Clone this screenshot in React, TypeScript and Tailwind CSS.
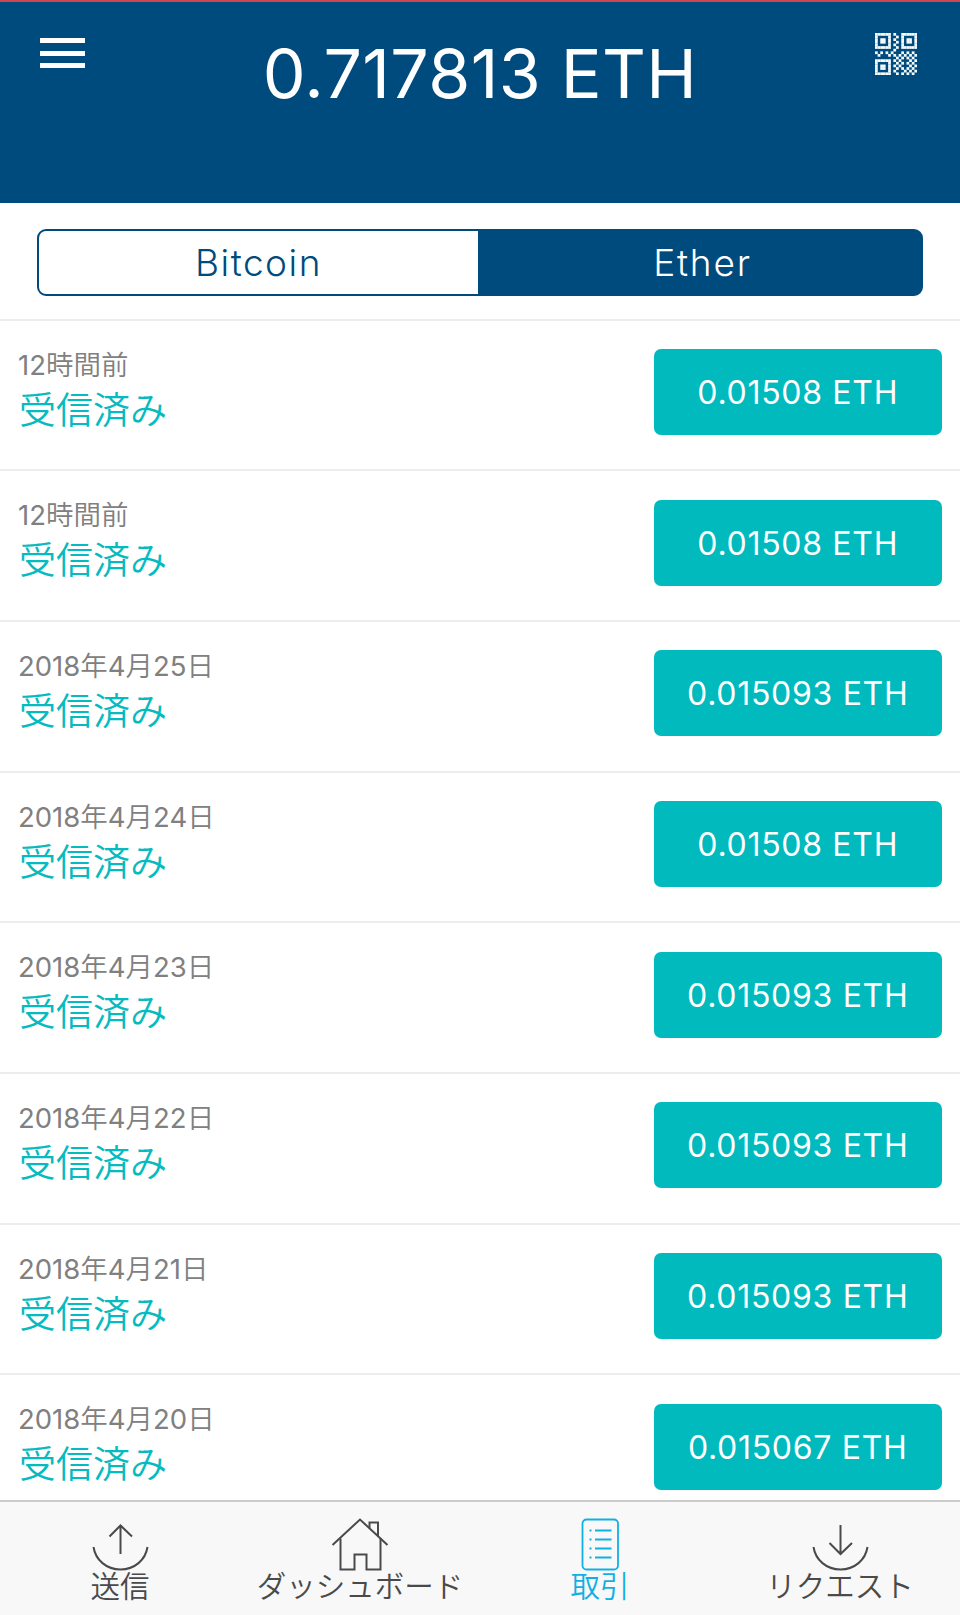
import React from 'react';

const transactions = [
  { date: '12時間前', amount: '0.01508 ETH' },
  { date: '12時間前', amount: '0.01508 ETH' },
  { date: '2018年4月25日', amount: '0.015093 ETH' },
  { date: '2018年4月24日', amount: '0.01508 ETH' },
  { date: '2018年4月23日', amount: '0.015093 ETH' },
  { date: '2018年4月22日', amount: '0.015093 ETH' },
  { date: '2018年4月21日', amount: '0.015093 ETH' },
  { date: '2018年4月20日', amount: '0.015067 ETH' },
];

// 16x16 module map
const qrModules = [
  '######.#..######',
  '#....#..#.#....#',
  '#.##.#.#..#.##.#',
  '#.##.#..#.#.##.#',
  '#....#.#..#....#',
  '######..#.######',
  '.......#........',
  '#.#.#.#...#.#.#.',
  '.#...#.#.#.#.#.#',
  '........#.#.#.#.',
  '######.#.#...#.#',
  '#....#..#.#.#.#.',
  '#.##.#.#.#...#.#',
  '#.##.#..#.#.#.#.',
  '#....#.#...#.#.#',
  '######..#.#.#.#.',
];

function QrIcon() {
  return (
    <svg viewBox="0 0 16 16" className="h-[42px] w-[42px]" fill="#f4fafc">
      {qrModules.map((row, y) =>
        row.split('').map((cell, x) =>
          cell === '#' ? <rect key={`${x}-${y}`} x={x} y={y} width="1.05" height="1.05" /> : null
        )
      )}
    </svg>
  );
}

function SendIcon() {
  return (
    <svg viewBox="0 0 60 56" className="h-14 w-[60px]" fill="none" stroke="currentColor" strokeWidth="2">
      <path d="M30.500 38V10M19.500 20.500 30.500 9.500 42 20.500" />
      <path d="M3.500 31C5.500 44 16.500 53.500 30.500 53.500S55.500 44 57.500 31" />
    </svg>
  );
}

function HomeIcon() {
  return (
    <svg viewBox="0 0 60 56" className="h-14 w-[60px]" fill="none" stroke="currentColor" strokeWidth="2">
      <path d="M2.500 29 30 3.500 57.500 29" />
      <path d="M10.500 22.500V53.500H24.500V38.500H36.500V53.500H50.500V22.500" />
      <path d="M39.500 12V6.500H48V20" />
    </svg>
  );
}

function ListIcon() {
  return (
    <svg viewBox="0 0 60 56" className="h-14 w-[60px]" fill="none" stroke="currentColor" strokeWidth="1.800">
      <rect x="12.500" y="3.500" width="35.500" height="50" rx="4" />
      <path d="M25 14.500H41.500M25 23.500H41.500M25 32.500H41.500M25 41.500H41.500" />
      <path d="M19.500 14.500H21.500M19.500 23.500H21.500M19.500 32.500H21.500M19.500 41.500H21.500" />
    </svg>
  );
}

function RequestIcon() {
  return (
    <svg viewBox="0 0 60 56" className="h-14 w-[60px]" fill="none" stroke="currentColor" strokeWidth="2">
      <path d="M30.500 9V37.500M19.500 27 30.500 38 42 27" />
      <path d="M3.500 31C5.500 44 16.500 53.500 30.500 53.500S55.500 44 57.500 31" />
    </svg>
  );
}

// digits are set a little heavier than the kanji around them
function DateLabel({ value }: { value: string }) {
  return (
    <p className="whitespace-nowrap text-[27.500px] font-[350] leading-[40px] text-[#808080]">
      {value.split(/(\d+)/).map((part, i) =>
        /\d/.test(part) ? (
          <span key={i} className="font-normal">
            {part}
          </span>
        ) : (
          part
        )
      )}
    </p>
  );
}

const tabs = [
  { label: '送信', icon: <SendIcon />, active: false },
  { label: 'ダッシュボード', icon: <HomeIcon />, active: false },
  { label: '取引', icon: <ListIcon />, active: true },
  { label: 'リクエスト', icon: <RequestIcon />, active: false },
];

export default function App(): React.ReactElement {
  return (
    <div className="flex h-[1615px] w-[960px] flex-col overflow-hidden bg-white font-['Inter','Noto_Sans_CJK_JP',sans-serif]">
      {/* HEADER */}
      <header className="flex h-[203px] shrink-0 items-start justify-between border-t-2 border-[#d2464e] bg-[#004b7d] pl-10 pr-[43px]">
        <button className="mt-9 flex w-[45px] flex-col gap-[7.500px]">
          <span className="h-[5px] w-full bg-white" />
          <span className="h-[5px] w-full bg-white" />
          <span className="h-[5px] w-full bg-white" />
        </button>
        <h1 className="mt-[31px] whitespace-nowrap text-[68px] leading-[80px] tracking-[0.400px] text-white">
          0.717813 ETH
        </h1>
        <button className="mt-[31px]">
          <QrIcon />
        </button>
      </header>

      {/* CURRENCY SWITCH */}
      <div className="h-[115.500px] shrink-0 px-[37px] pt-[26px]">
        <div className="flex h-[67px] rounded-[9px] border-2 border-[#004b7d] bg-[#004b7d] text-[37px] font-light">
          <button className="flex w-[439px] items-center justify-center rounded-l-[7px] bg-white tracking-[1.500px] text-[#004b7d]">
            Bitcoin
          </button>
          <button className="flex flex-1 items-center justify-center pl-1.5 tracking-[1.800px] text-white">
            Ether
          </button>
        </div>
      </div>

      {/* TRANSACTIONS */}
      <ul className="h-[1181px] shrink-0 overflow-hidden">
        {transactions.map((tx, i) => (
          <li key={i} className="flex h-[150.700px] justify-between border-t-2 border-[#ececec] pl-[18px] pr-[18.500px]">
            <div className="pt-[24px]">
              <DateLabel value={tx.date} />
              <p className="pl-px pt-px text-[37px] font-[350] leading-[50px] text-[#06bbc0]">受信済み</p>
            </div>
            <div className="mt-[28.500px] flex h-[86px] w-[287.500px] items-center justify-center rounded-[7px] bg-[#00babe] pt-[2px] text-[32px] tracking-[0.700px] text-white">
              {tx.amount}
            </div>
          </li>
        ))}
      </ul>

      {/* TAB BAR */}
      <nav className="grid flex-1 grid-cols-4 border-t-2 border-[#cbcbcb] bg-[#f8f8f8]">
        {tabs.map((tab) => (
          <button
            key={tab.label}
            className={`flex flex-col items-center pt-[14px] ${tab.active ? 'text-[#10b0e4]' : 'text-[#4a4a4a]'}`}
          >
            {tab.icon}
            <span className="-mt-px whitespace-nowrap text-[29.500px] font-[350] leading-[30px]">{tab.label}</span>
          </button>
        ))}
      </nav>
    </div>
  );
}
